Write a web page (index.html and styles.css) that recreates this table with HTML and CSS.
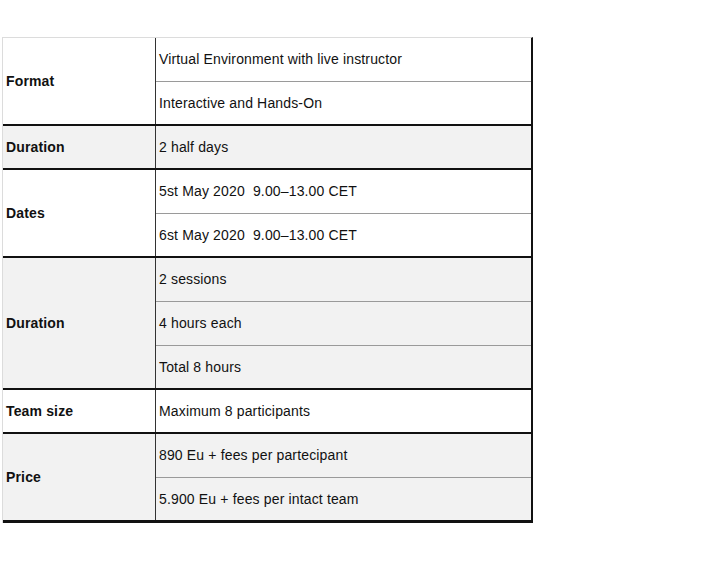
FILE: index.html
```html
<!DOCTYPE html>
<html>
<head>
<meta charset="utf-8">
<link rel="stylesheet" href="styles.css">
</head>
<body>
<div class="table">
  <div class="group">
    <div class="label">Format</div>
    <div class="values">
      <div class="value">Virtual Environment with live instructor</div>
      <div class="value">Interactive and Hands-On</div>
    </div>
  </div>
  <div class="group shaded">
    <div class="label">Duration</div>
    <div class="values">
      <div class="value">2 half days</div>
    </div>
  </div>
  <div class="group">
    <div class="label">Dates</div>
    <div class="values">
      <div class="value">5st May 2020&nbsp; 9.00–13.00 CET</div>
      <div class="value">6st May 2020&nbsp; 9.00–13.00 CET</div>
    </div>
  </div>
  <div class="group shaded">
    <div class="label">Duration</div>
    <div class="values">
      <div class="value">2 sessions</div>
      <div class="value">4 hours each</div>
      <div class="value">Total 8 hours</div>
    </div>
  </div>
  <div class="group">
    <div class="label">Team size</div>
    <div class="values">
      <div class="value">Maximum 8 participants</div>
    </div>
  </div>
  <div class="group shaded">
    <div class="label">Price</div>
    <div class="values">
      <div class="value">890 Eu + fees per partecipant</div>
      <div class="value">5.900 Eu + fees per intact team</div>
    </div>
  </div>
</div>
</body>
</html>
```
FILE: styles.css
```css
html, body {
  margin: 0;
  padding: 0;
  background: #fff;
}
body {
  font-family: "Liberation Sans", Arial, sans-serif;
  font-size: 14px;
  letter-spacing: 0.15px;
  color: #111;
}
.table {
  margin: 37px 0 0 2px;
  width: 531px;
  box-sizing: border-box;
  border-top: 1px solid #dcdcdc;
  border-left: 1px solid #dcdcdc;
  border-right: 2px solid #111;
}
.group {
  display: flex;
  border-bottom: 2px solid #111;
}
.group:last-child {
  border-bottom-width: 3px;
}
.group.shaded {
  background: #f2f2f2;
}
.label {
  width: 153px;
  flex: none;
  box-sizing: border-box;
  border-right: 1px solid #333;
  font-weight: bold;
  display: flex;
  align-items: center;
  padding-left: 3px;
}
.values {
  flex: 1;
  display: flex;
  flex-direction: column;
}
.value {
  height: 44px;
  box-sizing: border-box;
  border-bottom: 1px solid #9a9a9a;
  display: flex;
  align-items: center;
  padding-left: 3px;
  padding-bottom: 1px;
}
.value:last-child {
  height: 42px;
  border-bottom: none;
}
```
